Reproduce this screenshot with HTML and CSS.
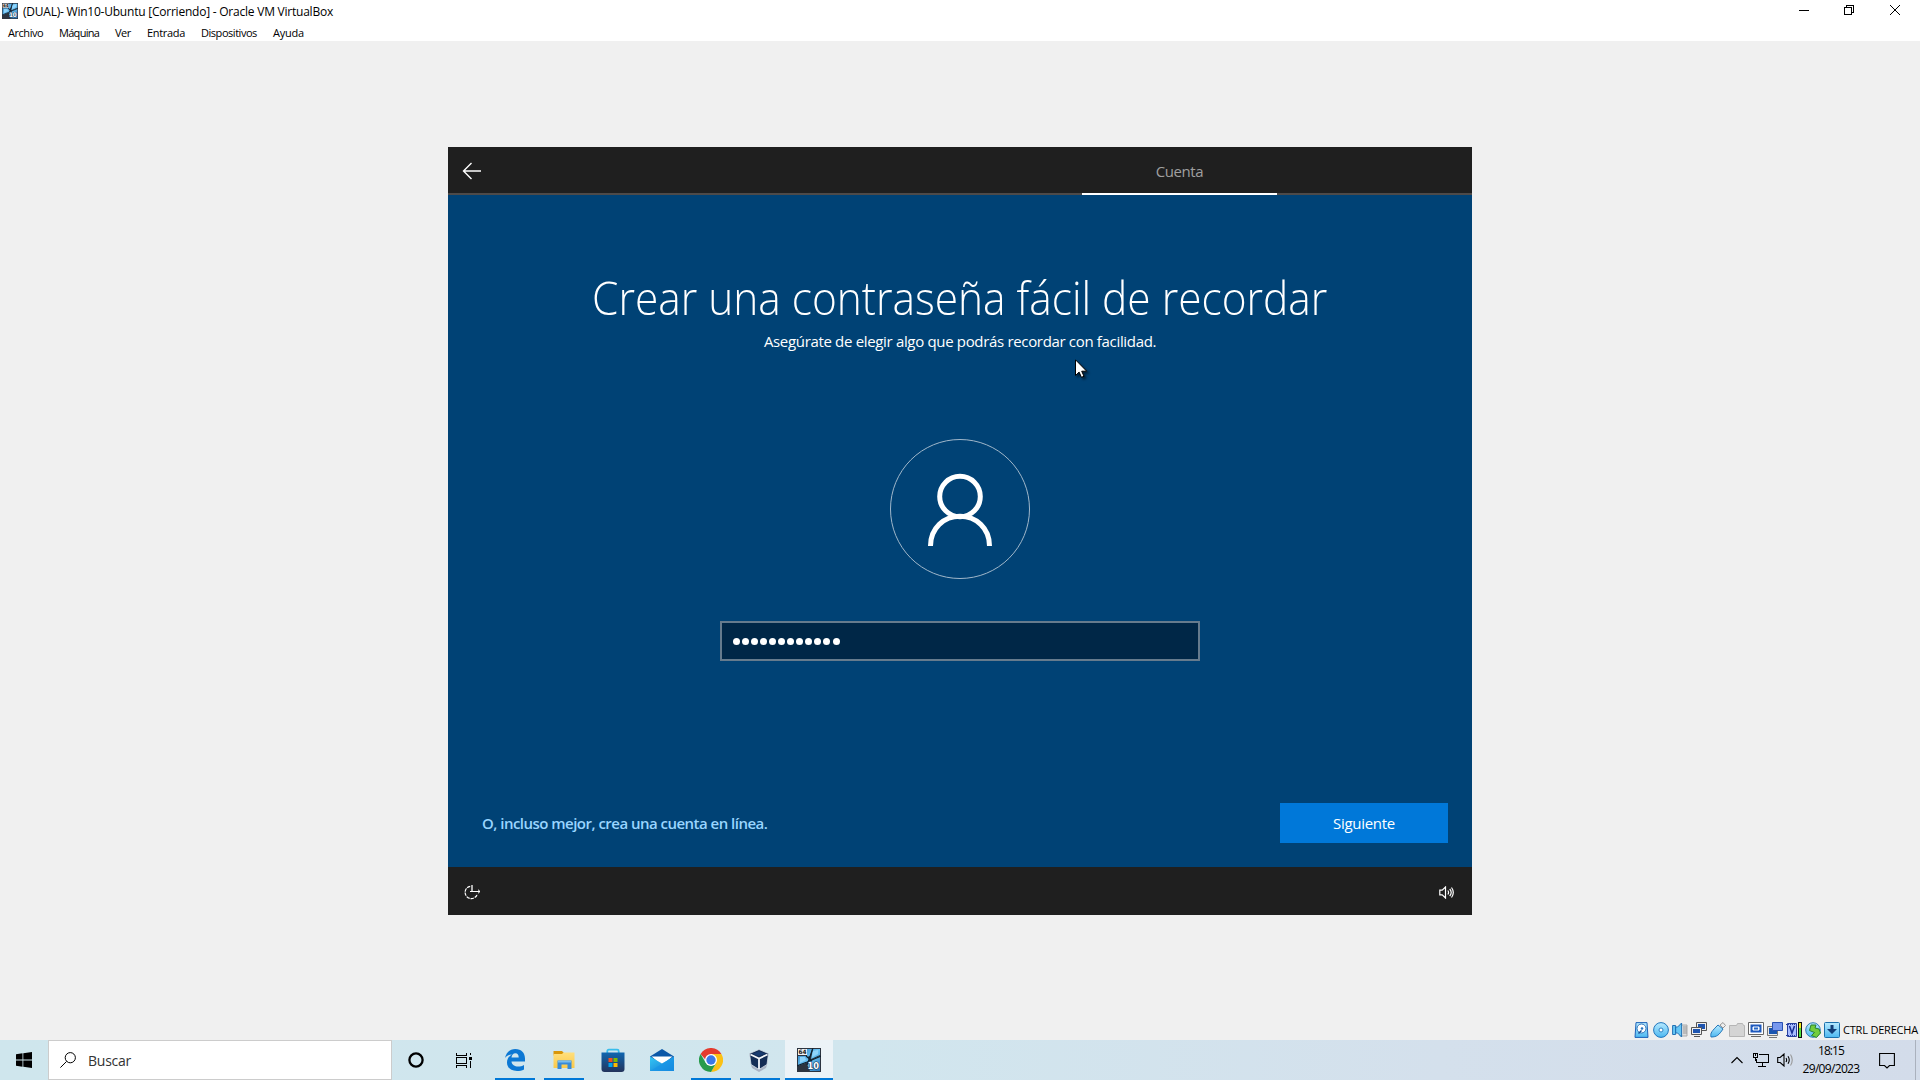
FILE: index.html
```html
<!DOCTYPE html>
<html lang="es">
<head>
<meta charset="utf-8">
<title>(DUAL)- Win10-Ubuntu [Corriendo] - Oracle VM VirtualBox</title>
<link rel="stylesheet" href="styles.css">
</head>
<body>
<svg width="0" height="0" class="defs" aria-hidden="true">
  <defs>
    <linearGradient id="win" x1="0" y1="0" x2="1" y2="1"><stop offset="0" stop-color="#2e7fc0"/><stop offset=".5" stop-color="#6cc6f8"/><stop offset="1" stop-color="#2a74b4"/></linearGradient>
    <linearGradient id="soft" x1="0" y1="0" x2="0" y2="1"><stop offset="0" stop-color="#b8eaff"/><stop offset="1" stop-color="#4db8f0"/></linearGradient>
    <linearGradient id="store" x1="0" y1="0" x2="0" y2="1"><stop offset="0" stop-color="#0f66b0"/><stop offset="1" stop-color="#24345c"/></linearGradient>
    <linearGradient id="mail" x1="0" y1="0" x2="1" y2="1"><stop offset="0" stop-color="#35c8f5"/><stop offset="1" stop-color="#1479d4"/></linearGradient>
    <linearGradient id="folder" x1="0" y1="0" x2="0" y2="1"><stop offset="0" stop-color="#ffdf7c"/><stop offset="1" stop-color="#fbc94a"/></linearGradient>
    <symbol id="vm64" viewBox="0 0 24 24">
      <path fill="#2c3440" d="M0 0h24v24H0z"/>
      <path fill="url(#win)" d="M10 1h5l-2 7-3 1zM16 1h7v6l-9 4zM1 8l8 0 3 3-1 3-10 4zM12 13l11-5v15H13l-3-7z"/>
      <path fill="#8fd4fb" d="M3 9l5 0 1 3-6 3zM16 3l5-1v4l-6 3z"/>
      <path fill="none" stroke="#10202e" stroke-width="1.2" d="M0 18l10-4 14-6M16 0l-6 17M9 8l6 5"/>
      <path fill="#f2f2f2" d="M1 1h9v6H1z"/>
      <text x="1.6" y="6.2" font-size="6" font-weight="700" font-family="DejaVu Sans" fill="#111" textLength="8" lengthAdjust="spacingAndGlyphs">64</text>
      <text x="10.5" y="20.8" font-size="9.5" font-weight="700" font-family="DejaVu Sans" fill="#fff" stroke="#12314e" stroke-width="1.2" paint-order="stroke" textLength="11.5" lengthAdjust="spacingAndGlyphs">10</text>
    </symbol>
  </defs>
</svg>
<header class="titlebar">
  <svg class="app-icon"><use href="#vm64"/></svg>
  <span class="title">(DUAL)- Win10-Ubuntu [Corriendo] - Oracle VM VirtualBox</span>
  <div class="window-buttons">
    <svg class="minimize" viewBox="0 0 10 10" shape-rendering="crispEdges"><path d="M0 5.500h10"/></svg>
    <svg viewBox="0 0 10 10" shape-rendering="crispEdges"><path d="M.5 2.500h7v7h-7zM2.500 2.500V.5h7v7h-2"/></svg>
    <svg viewBox="0 0 10 10"><path d="M0 0l10 10M10 0L0 10"/></svg>
  </div>
</header>
<nav class="menubar">
  <span class="m-file">Archivo</span><span class="m-machine">Máquina</span><span class="m-view">Ver</span><span class="m-input">Entrada</span><span class="m-devices">Dispositivos</span><span class="m-help">Ayuda</span>
</nav>
<main class="workspace">
  <section class="vm">
    <header class="vm-head">
      <svg class="back" viewBox="0 0 20 18"><path d="M19 9H1.500M9.500 1l-8 8 8 8"/></svg>
      <div class="tab">Cuenta</div>
    </header>
    <div class="vm-body">
      <h1>Crear una contraseña fácil de recordar</h1>
      <p class="sub">Asegúrate de elegir algo que podrás recordar con facilidad.</p>
      <svg class="avatar" viewBox="0 0 140 140"><circle cx="70" cy="70" r="69.500" stroke="#a0b7ca" stroke-width="1"/><g stroke="#fff" stroke-width="5"><circle cx="70" cy="57.500" r="20.300"/><path d="M40.500 107C40.500 89 54 77.300 70 77.300S99.500 89 99.500 107"/></g></svg>
      <div class="password"><i></i><i></i><i></i><i></i><i></i><i></i><i></i><i></i><i></i><i></i><i></i><i></i></div>
      <div class="actions">
        <a class="online">O, incluso mejor, crea una cuenta en línea.</a>
        <button class="next">Siguiente</button>
      </div>
    </div>
    <footer class="vm-foot">
      <svg width="17" height="15" viewBox="0 0 17 15"><path stroke-width="1.200" stroke-dasharray="3.400 .9" d="M6.200 1.300A6.200 6.200 0 1 0 13.300 9"/><path d="M8 0v7" stroke-width="1.300"/><path d="M6 6.500h10M14 4.700l2 1.800-2 1.800"/></svg>
      <svg width="15" height="13" viewBox="0 0 15 13"><path stroke-width="1.200" d="M.8 4.200h2.400L6.500 1v11L3.200 8.800H.8zM8.800 4.500c1 1.300 1 2.700 0 4M10.700 3c2 2.300 2 4.700 0 7M12.500 1.500c2.300 3.200 2.300 6.800 0 10"/></svg>
    </footer>
    <svg class="cursor" viewBox="0 0 14 20"><path fill="#fff" stroke="#000" d="M.5.8v15.700l3.600-3.400 2.300 5.200 2.600-1-2.300-5.100h5z"/></svg>
  </section>
</main>
<div class="statusbar">
  <svg viewBox="0 0 16 16"><path fill="url(#soft)" stroke="#1e62b8" d="M2 .6h11l1 14.800H1z"/><circle cx="7.500" cy="6.500" r="4.500" fill="#fff" stroke="#2f73b9"/><path d="M4.500 11.500l3-3" stroke="#184a90" stroke-width="1.500"/><circle cx="8" cy="6.500" r="1.300" fill="#2673c0"/></svg>
  <svg viewBox="0 0 16 16"><circle cx="8" cy="8" r="7.400" fill="url(#soft)" stroke="#2277bd"/><circle cx="8" cy="8" r="2" fill="#fff" stroke="#2e83c4"/></svg>
  <svg viewBox="0 0 16 16"><path fill="#ddd" stroke="#aaa" d="M8 3h7v11H8z"/><path stroke="#999" d="M11 5h4M11 7h4M11 9h4M11 11h4"/><path fill="#67c7f5" stroke="#2372b5" d="M.6 3.500h3v9h-3zM3.600 5h2l4-4v14l-4-4h-2z"/></svg>
  <svg viewBox="0 0 16 16"><path fill="#eee" stroke="#555" d="M5.500.5h10v8h-10z"/><path fill="#1e55b0" d="M7 2h7v5H7z"/><path fill="#eee" stroke="#555" d="M.5 5.500h10v7H.5zM3 14.500h6"/><path fill="#1e55b0" d="M2 7h7v4H2z"/></svg>
  <svg viewBox="0 0 16 16"><path fill="#eee" stroke="#999" d="M10 3l3-2.500 2.500 3L13 6z"/><path fill="url(#soft)" stroke="#2476b8" d="M1 15c-1-4 1-6 7-12l5 4c-4 6-6 8-12 8z"/></svg>
  <svg viewBox="0 0 16 16"><path fill="#d4d4d4" stroke="#b5b5b5" d="M.5 3.500h7l1-2h5l1 2h1v11H.5z"/></svg>
  <svg viewBox="0 0 16 16"><path fill="#fff" stroke="#666" d="M.5.5h15v12H.5zM3 14.500h10"/><path fill="#1d58bd" d="M2.500 2.500h11v8h-11z"/><path fill="#dceaff" stroke="#fff" d="M5 5h6v3H5z"/><path fill="#2465c5" d="M6 5.500h4v2H6z"/></svg>
  <svg viewBox="0 0 16 16"><path fill="#e8e8e8" stroke="#777" d="M.5 4.500h10v9H.5zM2 15.500h8"/><path fill="#1a55b0" d="M2 6h8v6H2z"/><path fill="#7797ed" stroke="#2850b2" d="M5.500.5h10v8h-10z"/></svg>
  <svg viewBox="0 0 16 16"><path fill="#a8bcff" stroke="#283f9e" d="M1.500 1.500h9v13h-9z"/><path stroke="#283f9e" stroke-dasharray="1 1" d="M0 2.500h12M0 13.500h12"/><path fill="none" stroke="#172c92" stroke-width="1.500" d="M3.500 4l2.500 7 2.500-7"/><path fill="#111" d="M12 0h4v16h-4z"/><path fill="#f4e91f" d="M13 1h2v9h-2z"/><path fill="#4ee23a" d="M13 6h2v9h-2z"/></svg>
  <svg viewBox="0 0 16 16"><circle cx="8" cy="8" r="7.300" fill="url(#soft)" stroke="#367db2"/><path fill="#73cd3c" stroke="#278032" d="M6 3h5l-1 3 4 1 1.500 4-4 4.500-5-2 3-3-5-2z"/></svg>
  <svg viewBox="0 0 16 16"><rect x=".5" y=".5" width="15" height="15" rx="1" fill="url(#soft)" stroke="#1c70ac"/><path fill="#123d77" d="M6.500 3h3v4H13l-5 5-5-5h3.500z"/></svg>
  <span class="hostkey">CTRL DERECHA</span>
</div>
<footer class="taskbar">
  <div class="start"><svg width="16" height="16" viewBox="0 0 16 16"><path d="M0 2.300l6.500-1v6.300H0zM7.300 1.200L16 0v7.600H7.300zM0 8.400h6.500v6.300l-6.500-1zM7.300 8.400H16V16l-8.700-1.200z"/></svg></div>
  <div class="search"><svg width="16" height="16" viewBox="0 0 16 16"><circle cx="10.300" cy="5.700" r="5.100"/><path d="M6.600 9.400L.4 15.600"/></svg><span>Buscar</span></div>
  <div class="tool"><svg width="16" height="16" viewBox="0 0 16 16"><circle cx="8" cy="8" r="6.600" fill="none" stroke="#000" stroke-width="2.300"/></svg></div>
  <div class="tool"><svg width="16" height="15" viewBox="0 0 16 15" shape-rendering="crispEdges"><path fill="none" stroke="#000" d="M.5 0v2.500h10V0M.5 4.500h10v6H.5zM.5 15v-2.500h10V15M14.500 0v2M14.500 8v7"/><path d="M13 4h3v3h-3z"/></svg></div>
  <div class="apps">
    <div class="app open"><svg viewBox="0 0 24 24"><path fill="#0c78d4" d="M2 10C3 4.500 7 1 12.300 1 18.500 1 22 5 22 10.500v3H8.500c.3 3.500 3.300 5 6.500 5 2.300 0 4.300-.6 6-1.600v4.600c-2 1-4.500 1.500-7 1.500C7.500 23 4 19.300 4 14.500c0-3.600 2-6.500 5-8C5.500 6.500 3.300 8.300 2 10zm6.500-.5h7.200c0-2.500-1-4.200-3.300-4.200S8.800 7 8.500 9.500z"/></svg></div>
    <div class="app open"><svg viewBox="0 0 24 24"><path fill="#d99608" d="M1.500 3h8.500l1.500 1.500v3h-10z"/><path fill="url(#folder)" d="M1.500 6H10l1.500-1.500h11V20h-21z"/><path fill="#398bd7" d="M5.500 12.500h14V21h-4v-4.500h-6V21h-4z"/><path fill="#78bdf0" d="M6 12.500h13v2H6z"/></svg></div>
    <div class="app"><svg viewBox="0 0 24 24"><path fill="none" stroke="#38bdec" stroke-width="1.800" d="M6.300 5.500V3.200q0-1.500 1.500-1.500h8.400q1.500 0 1.500 1.500v2.300"/><path fill="url(#store)" d="M.5 4.500h23V21q0 3-3 3h-17q-3 0-3-3z"/><path fill="#f25022" d="M7.500 10h4v4h-4z"/><path fill="#7fba00" d="M12.500 10h4v4h-4z"/><path fill="#00a4ef" d="M7.500 15h4v4h-4z"/><path fill="#ffb900" d="M12.500 15h4v4h-4z"/></svg></div>
    <div class="app"><svg viewBox="0 0 24 24"><path fill="#0b58a8" d="M0 8.500L12 1l12 7.500v4H0z"/><path fill="#fff" d="M1.500 8.500h21L12 17z"/><path fill="url(#mail)" d="M0 8.500l12 7 12-7V23H0z"/><path fill="#1794e6" d="M0 23l24-14.500V23z" opacity=".65"/></svg></div>
    <div class="app open"><svg viewBox="0 0 24 24"><path fill="#e43b2e" d="M1.600 6A12 12 0 0 1 22.400 6H12v12z"/><path fill="#fbc116" d="M22.400 6A12 12 0 0 1 12 24l5.200-9L12 6z"/><path fill="#279b4b" d="M1.600 6l5.200 9 5.200 3 5.200-3L12 24A12 12 0 0 1 1.600 6z"/><circle cx="12" cy="12" r="6" fill="#fff"/><circle cx="12" cy="12" r="4.700" fill="#3b78e7"/></svg></div>
    <div class="app open vbox"><svg viewBox="0 0 24 24"><path fill="#a9b3c4" d="M4 17l1 3 7 4 7-4 1-3-3-4H7z"/><path fill="#142d55" stroke="#d9e2ea" stroke-width=".8" d="M2.500 5.500L12 1.500l9.500 4-1.500 11-8 5-8-5z"/><path fill="none" stroke="#f3f6fa" stroke-width="1.800" d="M3.500 6.500l8.500 4 8.500-4M12 10.500V21"/><path fill="#183b70" d="M6 5.700l6-2.500 6 2.500-6 2.500z"/></svg></div>
    <div class="app open active"><svg viewBox="0 0 24 24"><use href="#vm64"/></svg></div>
  </div>
  <div class="tray">
    <svg width="12" height="8" viewBox="0 0 12 8"><path d="M.5 7L6 1.500 11.500 7"/></svg>
    <svg class="net" width="16" height="14" viewBox="0 0 16 14" shape-rendering="crispEdges"><path d="M6 1.500h9.500v8H3.500V6M9.500 9.500v4M5 13.500h8M.5.5h4v4h-4zM2.500 4v4M2.500 1v2"/></svg>
    <svg class="vol" width="17" height="14" viewBox="0 0 17 14"><path d="M.7 4.500h2.500L7 1v12L3.200 9.500H.7zM9 5q1.300 2 0 4M11 3.200q2.500 3.800 0 7.600"/><path stroke="#999" d="M13.500 1.500q3.500 5.500 0 11"/></svg>
    <div class="clock"><span class="time">18:15</span><span class="date">29/09/2023</span></div>
    <svg class="notes" width="16" height="17" viewBox="0 0 16 17"><path d="M.6 1.500h14.800v12H10.500L8 16l-2.500-2.500H.6z"/></svg>
    <i class="peek"></i>
  </div>
</footer>
</body>
</html>
```
FILE: styles.css
```css
* { box-sizing: border-box; }
body { margin: 0; width: 1920px; height: 1080px; overflow: hidden; display: flex; flex-direction: column; background: #f0f0f0; color: #000; font-family: "Open Sans", "Noto Sans", sans-serif; }
span { white-space: nowrap; }
svg { display: block; flex: none; }
.defs { position: absolute; }

.titlebar { height: 22px; flex: none; background: #fff; display: flex; align-items: center; padding: 0 16px 0 2px; font-size: 12px; line-height: 22px; letter-spacing: -0.227px; }
.title { padding-top: 1px; }
.app-icon { width: 16px; height: 16px; margin-right: 5px; }
.window-buttons { margin-left: auto; display: flex; gap: 36px; padding: 0 4px 2px 0; }
.window-buttons svg { width: 10px; height: 10px; fill: none; stroke: #000; }
.window-buttons .minimize { margin-right: -1px; }

.menubar { height: 19px; flex: none; background: #fff; display: flex; gap: 16px; padding-left: 8px; font-size: 11px; line-height: 21px; letter-spacing: -0.46px; }
.menubar span { display: block; }
.m-file { width: 35px; }
.m-machine { width: 40px; letter-spacing: -0.7px; }
.m-view { width: 16px; }
.m-input { width: 38px; letter-spacing: -0.32px; }
.m-devices { width: 56px; }
.m-help { width: 31px; letter-spacing: -0.21px; }

.workspace { height: 976px; flex: none; padding: 106px 0 0 448px; }
.vm { position: relative; width: 1024px; height: 768px; background: #004275; color: #fff; display: flex; flex-direction: column; font-size: 15px; letter-spacing: -0.33px; }
.vm-head { height: 48px; background: #1f1f1f; border-bottom: 2px solid #4d4a49; display: flex; }
.back { width: 20px; height: 18px; margin: 15px 0 0 14px; fill: none; stroke: #fff; stroke-width: 1.4; }
.tab { width: 195px; height: 48px; margin-left: 600px; border-bottom: 2px solid #fff; color: #a0a0a0; text-align: center; line-height: 49px; letter-spacing: -0.45px; }
.vm-body { height: 672px; display: flex; flex-direction: column; align-items: center; }
h1 { margin: 71px 0 0; font-size: 46px; font-weight: 300; line-height: 62px; padding-bottom: 2px; letter-spacing: 0; white-space: nowrap; transform: scaleX(0.922); }
.sub { margin: 0; line-height: 22px; }
.avatar { width: 140px; height: 140px; margin-top: 87px; fill: none; }
.password { width: 480px; height: 40px; margin-top: 42px; border: 2px solid #667b8d; background: #002747; display: flex; align-items: center; gap: 2.05px; padding: 1px 0 0 11px; }
.password i { width: 7px; height: 7px; border-radius: 50%; background: #fff; }
.actions { width: 100%; margin-top: 142px; padding: 0 24px 0 34px; display: flex; justify-content: space-between; align-items: center; }
.online { color: #99d5ff; font-weight: 600; line-height: 40px; letter-spacing: -0.52px; }
.next { width: 168px; height: 40px; border: 0; padding: 0; background: #0078d9; color: #fff; font: inherit; letter-spacing: -0.28px; }
.vm-foot { height: 48px; background: #1f1f1f; display: flex; justify-content: space-between; align-items: center; padding: 2px 18px 0 16px; }
.vm-foot svg { fill: none; stroke: #fff; }
.cursor { position: absolute; left: 627px; top: 212px; width: 14px; height: 20px; filter: drop-shadow(2px 2px 1px rgba(0,0,0,.5)); }

.statusbar { height: 23px; flex: none; display: flex; align-items: center; justify-content: flex-end; gap: 3px; padding: 2px 2px 0 0; font-size: 11px; letter-spacing: -0.2px; }
.statusbar svg { width: 16px; height: 16px; fill: none; }
.hostkey { width: 75px; }

.taskbar { height: 40px; flex: none; display: flex; background: linear-gradient(90deg, #cfe6ed 0%, #d1e6ee 45%, #d4e0ec 75%, #d3dcea 100%); }
.start { width: 48px; padding: 12px 16px; }
.search { width: 344px; border: 1px solid #ccc; background: #fff; display: flex; align-items: center; gap: 12px; padding-left: 11px; font-size: 14px; color: #333; letter-spacing: -0.25px; }
.search svg { fill: none; stroke: #000; }
.tool { width: 48px; display: flex; align-items: center; justify-content: center; }
.apps { display: flex; gap: 1px; margin-left: 3px; }
.app { width: 48px; height: 40px; padding: 8px 12px 0; }
.app svg { width: 24px; height: 24px; }
.open { background: linear-gradient(#0078d7, #0078d7) 4px 38px / 40px 2px no-repeat; }
.active { background: linear-gradient(#0078d7, #0078d7) 0 38px / 48px 2px no-repeat, #ecf3f7; }
.vbox { padding-left: 11px; }

.tray { margin-left: auto; display: flex; align-items: center; font-size: 12px; }
.tray svg { fill: none; stroke: #000; stroke-width: 1.1; margin-right: 10px; }
.tray .net, .tray .vol { margin-right: 8px; }
.tray .notes { margin-right: 20px; }
.clock { width: 60px; display: flex; flex-direction: column; align-items: center; line-height: 18px; margin-right: 17px; padding-right: 2px; }
.time { letter-spacing: -0.9px; }
.date { letter-spacing: -0.67px; }
.peek { width: 5px; height: 40px; border-left: 1px solid #aab1bd; }
```
